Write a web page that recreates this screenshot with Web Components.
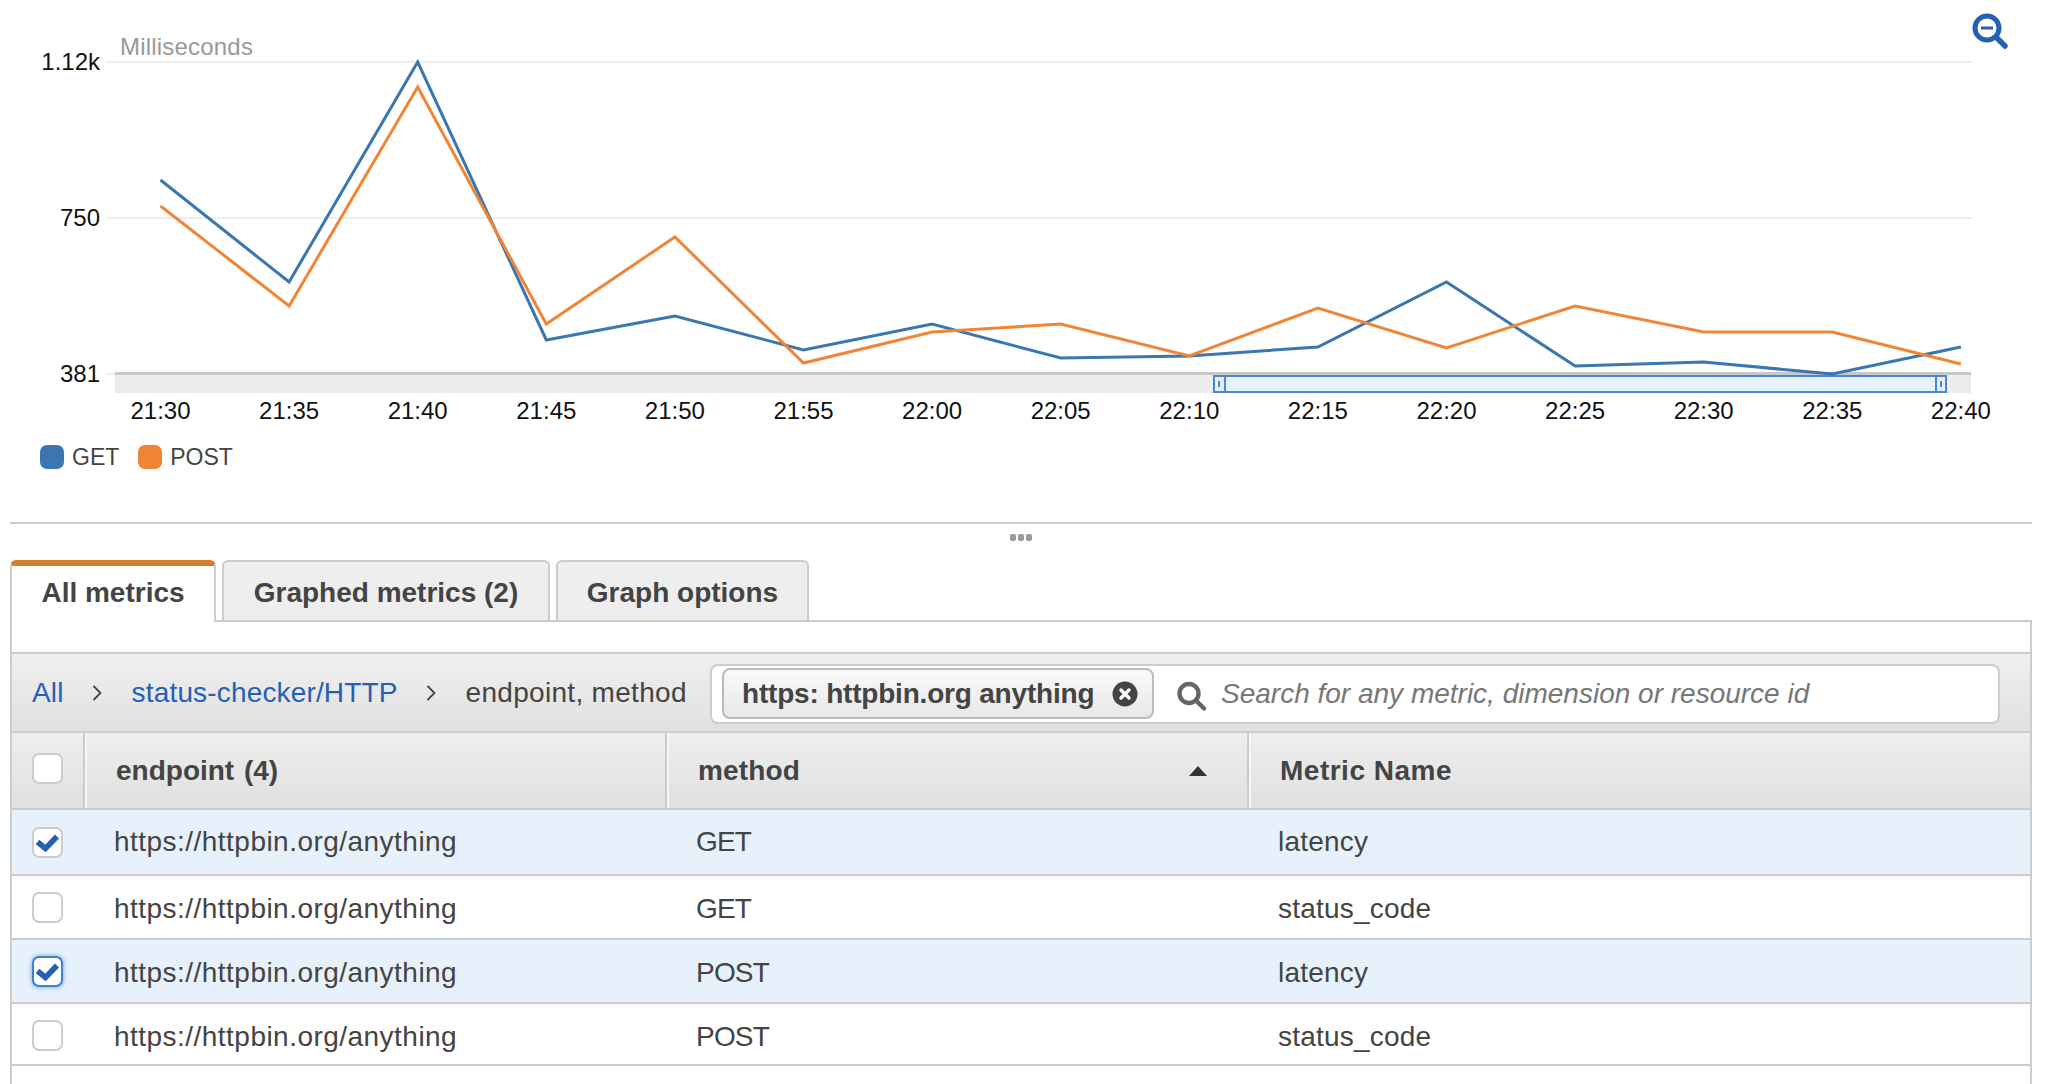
<!DOCTYPE html>
<html>
<head>
<meta charset="utf-8">
<style>
    html, body { margin: 0; padding: 0; background: #fff; }
    body { font-family: "Liberation Sans", Arial, sans-serif; color: #444; width: 2050px; height: 1084px; overflow: hidden; }
</style>
</head>
<body>
<metric-chart></metric-chart>
<chart-legend></chart-legend>
<pane-divider></pane-divider>
<metric-tabs></metric-tabs>
<metric-panel>
    <metric-toolbar></metric-toolbar>
    <table-head></table-head>
    <metric-row selected height="66" endpoint="https://httpbin.org/anything" method="GET" metric="latency"></metric-row>
    <metric-row height="64" box-shift="1" text-shift="2" endpoint="https://httpbin.org/anything" method="GET" metric="status_code"></metric-row>
    <metric-row selected focused height="64" box-shift="1" text-shift="2" endpoint="https://httpbin.org/anything" method="POST" metric="latency"></metric-row>
    <metric-row height="62" box-shift="3" text-shift="2" endpoint="https://httpbin.org/anything" method="POST" metric="status_code"></metric-row>
</metric-panel>
<script>
const GET_Y = [180, 282, 62, 340, 316, 350, 324, 358, 356, 347, 282, 366, 362, 374, 347];
const POST_Y = [206, 306, 87, 324, 237, 363, 332, 324, 356, 308, 348, 306, 332, 332, 364];
const TIMES = ["21:30","21:35","21:40","21:45","21:50","21:55","22:00","22:05","22:10","22:15","22:20","22:25","22:30","22:35","22:40"];
const xAt = (i) => 160.5 + i * 128.6;
const toPoints = (ys) => ys.map((y, i) => `${xAt(i).toFixed(1)},${y}`).join(" ");

class MetricChart extends HTMLElement {
    constructor() {
        super();
        this.attachShadow({ mode: "open" });
        const labels = TIMES.map((t, i) => `<text x="${xAt(i).toFixed(1)}" y="419" text-anchor="middle">${t}</text>`).join("");
        this.shadowRoot.innerHTML = `
<style>
    :host { display: block; height: 436px; }
    svg { display: block; }
    text { font-family: "Liberation Sans", Arial, sans-serif; font-size: 24px; fill: #111; }
    .unit { fill: #999; letter-spacing: .2px; }
</style>
<svg width="2050" height="436" viewBox="0 0 2050 436">
    <line x1="106" y1="62" x2="1971" y2="62" stroke="#eee" stroke-width="2"/>
    <line x1="106" y1="218" x2="1971" y2="218" stroke="#eee" stroke-width="2"/>
    <line x1="106" y1="374" x2="115" y2="374" stroke="#eee" stroke-width="2"/>
    <rect x="115" y="372" width="1856" height="3" fill="#c8c8c8"/>
    <rect x="115" y="375" width="1856" height="18" fill="#ececec"/>
    <rect x="1214" y="376" width="732" height="16" fill="#e7f1fb" stroke="#4a86d8" stroke-width="2"/>
    <line x1="1225" y1="376" x2="1225" y2="392" stroke="#4a86d8" stroke-width="2"/>
    <line x1="1936" y1="376" x2="1936" y2="392" stroke="#4a86d8" stroke-width="2"/>
    <line x1="1219" y1="381" x2="1219" y2="387" stroke="#4a86d8" stroke-width="2"/>
    <line x1="1941" y1="381" x2="1941" y2="387" stroke="#4a86d8" stroke-width="2"/>
    <polyline points="${toPoints(GET_Y)}" fill="none" stroke="#3a76af" stroke-width="3"/>
    <polyline points="${toPoints(POST_Y)}" fill="none" stroke="#ef8535" stroke-width="3"/>
    <text class="unit" x="120" y="55">Milliseconds</text>
    <text x="100" y="70" text-anchor="end">1.12k</text>
    <text x="100" y="226" text-anchor="end">750</text>
    <text x="100" y="382" text-anchor="end">381</text>
    ${labels}
    <g fill="none" stroke="#2461b5" stroke-linecap="round">
        <circle cx="1987" cy="28" r="12" stroke-width="5"/>
        <line x1="1997" y1="38" x2="2005" y2="46" stroke-width="5.5"/>
        <line x1="1981" y1="28" x2="1993" y2="28" stroke-width="3" stroke-linecap="butt"/>
    </g>
</svg>`;
    }
}
customElements.define("metric-chart", MetricChart);

class ChartLegend extends HTMLElement {
    constructor() {
        super();
        this.attachShadow({ mode: "open" });
        this.shadowRoot.innerHTML = `
<style>
    :host { display: flex; align-items: center; height: 40px; padding-left: 40px; padding-top: 2px; box-sizing: border-box; font-size: 23px; color: #444; }
    i { width: 24px; height: 24px; border-radius: 7px; margin-right: 8px; }
    span { margin-right: 19px; }
</style>
<i style="background:#3a76af"></i><span>GET</span>
<i style="background:#ef8535"></i><span>POST</span>`;
    }
}
customElements.define("chart-legend", ChartLegend);

class PaneDivider extends HTMLElement {
    constructor() {
        super();
        this.attachShadow({ mode: "open" });
        this.shadowRoot.innerHTML = `
<style>
    :host { display: flex; flex-direction: column; align-items: center; height: 38px; margin: 46px 18px 0 10px; border-top: 2px solid #ccc; box-sizing: border-box; }
    .dots { display: flex; gap: 2px; margin-top: 10px; }
    .dots b { width: 6px; height: 7px; border-radius: 2px; background: #999; }
</style>
<div class="dots"><b></b><b></b><b></b></div>`;
    }
}
customElements.define("pane-divider", PaneDivider);

class MetricTabs extends HTMLElement {
    constructor() {
        super();
        this.attachShadow({ mode: "open" });
        this.shadowRoot.innerHTML = `
<style>
    :host { display: flex; gap: 6px; height: 62px; margin: 0 18px 0 10px; box-sizing: border-box; border-bottom: 2px solid #ccc; font-size: 28px; font-weight: 700; color: #444; }
    div { box-sizing: border-box; height: 60px; padding-top: 3px; display: flex; align-items: center; justify-content: center; background: #eee; border: 2px solid #ccc; border-bottom: 0; border-radius: 6px 6px 0 0; }
    .on { width: 206px; height: 62px; padding-top: 0; background: #fff; border: 2px solid #ccc; border-top: 6px solid #d57c2e; border-bottom: 0; padding-bottom: 2px; }
</style>
<div class="on">All metrics</div>
<div style="width:328px">Graphed metrics (2)</div>
<div style="width:253px">Graph options</div>`;
    }
}
customElements.define("metric-tabs", MetricTabs);

class MetricPanel extends HTMLElement {
    constructor() {
        super();
        this.attachShadow({ mode: "open" });
        this.shadowRoot.innerHTML = `
<style>
    :host { display: block; margin: 0 18px 0 10px; padding-top: 30px; height: 462px; box-sizing: border-box; border-left: 2px solid #ccc; border-right: 2px solid #ccc; }
</style>
<slot></slot>`;
    }
}
customElements.define("metric-panel", MetricPanel);

class MetricToolbar extends HTMLElement {
    constructor() {
        super();
        this.attachShadow({ mode: "open" });
        const chevron = `<svg class="sep" width="10" height="16" viewBox="0 0 10 16"><path d="M1.5 1l7 7-7 7" fill="none" stroke="#444" stroke-width="1.8"/></svg>`;
        this.shadowRoot.innerHTML = `
<style>
    :host { display: flex; align-items: center; height: 79px; box-sizing: border-box; padding-left: 20px; border-top: 2px solid #ccc; background: linear-gradient(#f0f0f0, #e0e0e0); font-size: 28px; color: #444; }
    a { color: #2461b5; letter-spacing: .16px; }
    .sep { margin: 0 30px 0 28px; flex: none; }
    .crumb { letter-spacing: .3px; }
    .search { display: flex; align-items: center; box-sizing: border-box; height: 60px; width: 1290px; margin: 2px 30px 0 auto; background: #fff; border: 2px solid #ccc; border-radius: 8px; padding-left: 10px; }
    .chip { display: flex; align-items: center; flex: none; box-sizing: border-box; width: 432px; height: 51px; padding-left: 18px; border: 2px solid #bbb; border-radius: 8px; background: linear-gradient(#fafafa, #e8e8e8); font-weight: 700; white-space: nowrap; letter-spacing: -.2px; }
    .chip svg { margin-left: 18px; }
    .glass { margin: 0 14px 0 23px; flex: none; }
    em { color: #777; white-space: nowrap; }
</style>
<a>All</a>${chevron}<a>status-checker/HTTP</a>${chevron}<span class="crumb">endpoint, method</span>
<div class="search">
    <div class="chip"><span>https: httpbin.org anything</span>
        <svg width="26" height="26" viewBox="0 0 26 26"><circle cx="13" cy="13" r="12.5" fill="#444"/><path d="M9 9l8 8M17 9l-8 8" stroke="#fff" stroke-width="3.4" stroke-linecap="round"/></svg>
    </div>
    <svg class="glass" width="30" height="36" viewBox="0 0 30 36" fill="none" stroke="#666"><circle cx="12" cy="17.5" r="9.5" stroke-width="4.4"/><line x1="19" y1="24.5" x2="27" y2="32.5" stroke-width="4.4" stroke-linecap="round"/></svg>
    <em>Search for any metric, dimension or resource id</em>
</div>`;
    }
}
customElements.define("metric-toolbar", MetricToolbar);

const checkStyles = `
    .box { box-sizing: border-box; width: 31px; height: 31px; background: #fff; border: 2px solid #ccc; border-radius: 7px; display: flex; align-items: center; justify-content: center; }
    .box.focus { border-color: #3f7fd6; box-shadow: 0 0 5px rgba(63,127,214,.7); }
`;

class TableHead extends HTMLElement {
    constructor() {
        super();
        this.attachShadow({ mode: "open" });
        this.shadowRoot.innerHTML = `
<style>
    :host { display: grid; grid-template-columns: 73px 582px 582px 1fr; height: 79px; box-sizing: border-box; border-top: 2px solid #ccc; border-bottom: 2px solid #ccc; background: linear-gradient(#eeeeee, #e0e0e0); font-size: 28px; font-weight: 700; color: #444; }
    ${checkStyles}
    .c { display: flex; align-items: center; padding-left: 31px; box-sizing: border-box; border-right: 2px solid #ccc; box-shadow: 2px 0 0 #f6f6f6; letter-spacing: .15px; }
    .c.check { padding-left: 20px; padding-bottom: 5px; }
    .c.last { border: 0; box-shadow: none; letter-spacing: .5px; }
    .tri { margin-left: auto; margin-right: 40px; width: 0; height: 0; border: 9px solid transparent; border-top: 0; border-bottom: 10px solid #333; }
    .n { word-spacing: 2px; letter-spacing: 0; }
</style>
<div class="c check"><div class="box"></div></div>
<div class="c"><span class="n">endpoint (4)</span></div>
<div class="c"><span>method</span><span class="tri"></span></div>
<div class="c last"><span>Metric Name</span></div>`;
    }
}
customElements.define("table-head", TableHead);

class MetricRow extends HTMLElement {
    constructor() {
        super();
        this.attachShadow({ mode: "open" });
        const tick = this.hasAttribute("selected")
            ? `<svg width="27" height="27" viewBox="0 0 27 27"><path d="M3.5 13l8 6.5L23 7.5" fill="none" stroke="#2461b5" stroke-width="5.6"/></svg>`
            : "";
        const boxShift = this.getAttribute("box-shift") || 0;
        const textShift = this.getAttribute("text-shift") || 0;
        this.shadowRoot.innerHTML = `
<style>
    :host { display: grid; grid-template-columns: 73px 582px 582px 1fr; align-items: center; box-sizing: border-box; padding-top: ${boxShift}px; border-bottom: 2px solid #ccc; font-size: 28px; color: #444; background: #fff; }
    :host([selected]) { background: #e7f1fb; }
    ${checkStyles}
    .c { padding-left: 29px; padding-top: ${textShift}px; }
    .c.check { padding-left: 20px; padding-top: 0; }
    .url { letter-spacing: .47px; }
    .verb { letter-spacing: -.8px; }
    .name { letter-spacing: .2px; }
</style>
<div class="c check"><div class="box${this.hasAttribute("focused") ? " focus" : ""}">${tick}</div></div>
<div class="c url">${this.getAttribute("endpoint")}</div>
<div class="c verb">${this.getAttribute("method")}</div>
<div class="c name">${this.getAttribute("metric")}</div>`;
        this.style.height = this.getAttribute("height") + "px";
    }
}
customElements.define("metric-row", MetricRow);
</script>
</body>
</html>
